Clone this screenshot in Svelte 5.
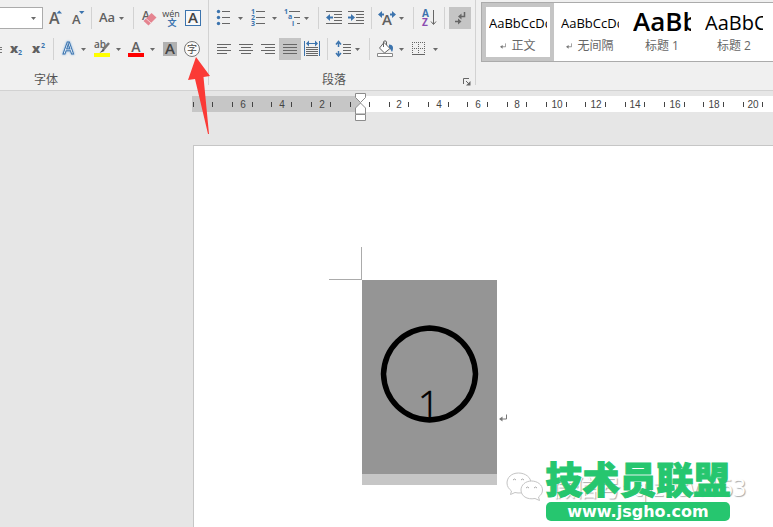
<script>
  const UNIT = 59 / 6;

  const styles = [
    { name: '正文', mark: true, kind: 'body', active: true },
    { name: '无间隔', mark: true, kind: 'body' },
    { name: '标题 1', kind: 'h1' },
    { name: '标题 2', kind: 'h2' }
  ];

  // quarter positions: odd ones get a tick, every fourth one a number
  const before = [1, 3, 4, 5, 7, 8, 9, 11, 12, 13, 15, 17];
  const after = Array.from({ length: 160 }, (_, i) => i + 1);
  const at = (n) => Math.round(n * UNIT);

  const aligns = [
    { title: '左对齐', rows: [[4, 14], [4, 10], [4, 14], [4, 10]] },
    { title: '居中', rows: [[4, 14], [6, 10], [4, 14], [6, 10]] },
    { title: '右对齐', rows: [[4, 14], [8, 10], [4, 14], [8, 10]] },
    { title: '两端对齐', rows: [[4, 14], [4, 14], [4, 14], [4, 14]], on: true }
  ];
</script>

{#snippet caret(x)}
  <path d="M{x} 10h5l-2.500 3z" fill="#6a6a6a" />
{/snippet}

{#snippet returnMark(size)}
  <svg class="ret" width={size} height={size} viewBox="0 0 8 8" aria-hidden="true">
    <path d="M7.500 0.500v4.500H2" fill="none" stroke="#777" />
    <path d="M3.500 2.500v5L0 5z" fill="#777" />
  </svg>
{/snippet}

<div class="app">
  <header class="ribbon">
    <section class="group font-group">
      <div class="row">
        <div class="combo">
          <select aria-label="字号"><option></option></select>
          <svg width="9" height="22" viewBox="0 0 9 22">{@render caret(1)}</svg>
        </div>
        <button aria-label="增大字号">
          <svg width="24" height="22">
            <text x="6" y="17" font-size="16" class="g">A</text>
            <path d="M13.500 6.500h5.500l-2.750-3z" fill="#3c74ae" />
          </svg>
        </button>
        <button aria-label="减小字号">
          <svg width="22" height="22">
            <text x="5" y="17" font-size="13" class="g">A</text>
            <path d="M12 4h5.500l-2.750 3z" fill="#3c74ae" />
          </svg>
        </button>
        <i class="sep tight"></i>
        <button aria-label="更改大小写">
          <svg width="37" height="22">
            <text x="5" y="15" font-size="13" class="g">Aa</text>
            {@render caret(25)}
          </svg>
        </button>
        <i class="sep tight"></i>
        <button aria-label="清除格式">
          <svg width="24" height="22">
            <text x="6" y="13" font-size="12" class="g">A</text>
            <path d="M15.500 6l5 4.500-8 8-5-4.500z" fill="#e58490" />
            <path d="M10 11.500l5 4.500" stroke="#f6d4d8" />
          </svg>
        </button>
        <button aria-label="拼音指南">
          <svg width="22" height="22">
            <text x="11" y="10" font-size="9" text-anchor="middle" class="k">wén</text>
            <text x="12" y="19" font-size="9" text-anchor="middle" class="b cjk">文</text>
          </svg>
        </button>
        <button aria-label="字符边框">
          <svg width="22" height="22">
            <rect x="3.500" y="3.500" width="15" height="15" fill="#f8f8f8" stroke="#3c74ae" />
            <text x="11" y="16" font-size="15" text-anchor="middle" class="k g">A</text>
          </svg>
        </button>
      </div>

      <div class="row">
        <button aria-label="删除线">
          <svg width="4" height="22"><path d="M0 9.500h2M0 11.500h2M0 14.500h2" stroke="#777" /></svg>
        </button>
        <button aria-label="下标">
          <svg width="23" height="22">
            <text x="6" y="15" font-size="13" class="g heavy">x</text>
            <text x="14" y="17" font-size="7" class="b">2</text>
          </svg>
        </button>
        <button aria-label="上标">
          <svg width="22" height="22">
            <text x="5" y="15" font-size="13" class="g heavy">x</text>
            <text x="14" y="10" font-size="7" class="b">2</text>
          </svg>
        </button>
        <i class="sep"></i>
        <button aria-label="文本效果">
          <svg width="34" height="22">
            <text x="6" y="16" font-size="16" class="hollow">A</text>
            {@render caret(24)}
          </svg>
        </button>
        <button aria-label="突出显示">
          <svg width="34" height="22">
            <text x="3" y="10" font-size="10" class="g">ab</text>
            <path d="M18 5l-6 7" stroke="#777" stroke-width="2.500" />
            <path d="M12 11l-3.500 4 5-2z" fill="#555" />
            <path d="M3 15h16v4H3z" fill="#ff0" />
            {@render caret(25)}
          </svg>
        </button>
        <button aria-label="字体颜色">
          <svg width="34" height="22">
            <text x="11" y="14" font-size="14" text-anchor="middle" class="g">A</text>
            <path d="M3 15h16v4H3z" fill="#f00" />
            {@render caret(25)}
          </svg>
        </button>
        <button aria-label="字符底纹">
          <svg width="22" height="22">
            <path d="M4 4h14v14H4z" fill="#b1b1b1" />
            <text x="11" y="16" font-size="15" text-anchor="middle" class="k g">A</text>
          </svg>
        </button>
        <button aria-label="带圈字符">
          <svg width="22" height="22">
            <circle cx="11" cy="11" r="7.500" fill="#fafafa" stroke="#777" />
            <text x="11" y="15" font-size="10" text-anchor="middle" class="k cjk">字</text>
          </svg>
        </button>
      </div>
      <footer>字体</footer>
    </section>

    <section class="group para-group">
      <div class="row">
        <button aria-label="项目符号">
          <svg width="34" height="22">
            <g fill="#3c74ae"><circle cx="5.500" cy="4.500" r="1.700" /><circle cx="5.500" cy="10.500" r="1.700" /><circle cx="5.500" cy="16.500" r="1.700" /></g>
            <path d="M9 4.500h8M9 10.500h8M9 16.500h8" class="line" />
            {@render caret(25)}
          </svg>
        </button>
        <button aria-label="编号">
          <svg width="34" height="22">
            <g font-size="7" class="b"><text x="4" y="7">1</text><text x="4" y="13">2</text><text x="4" y="19">3</text></g>
            <path d="M9 4.500h9M9 10.500h9M9 16.500h9" class="line" />
            {@render caret(25)}
          </svg>
        </button>
        <button aria-label="多级列表">
          <svg width="33" height="22">
            <g font-size="7" class="b"><text x="3" y="7">1</text><text x="7" y="12">a</text><text x="11" y="19">i</text></g>
            <path d="M8 4.500h11M13 10.500h6M16 16.500h3" class="line" />
            {@render caret(23)}
          </svg>
        </button>
        <i class="sep"></i>
        <button aria-label="减少缩进量">
          <svg width="23" height="22">
            <path d="M4 4.500h16M12 7.500h8M12 10.500h8M12 13.500h8M4 16.500h16" class="line" />
            <path d="M4 10.500l4-3.500v2.500h3v2H8V14z" fill="#3c74ae" />
          </svg>
        </button>
        <button aria-label="增加缩进量">
          <svg width="22" height="22">
            <path d="M3 4.500h16M11 7.500h8M11 10.500h8M11 13.500h8M3 16.500h16" class="line" />
            <path d="M10 10.500L6 7v2.500H3v2h3V14z" fill="#3c74ae" />
          </svg>
        </button>
        <i class="sep"></i>
        <button aria-label="中文版式">
          <svg width="34" height="22">
            <text x="12" y="18" font-size="15" text-anchor="middle" class="g">A</text>
            <path d="M3 7.500L7 4v2.500h2v2H7V11zM21 7.500L17 4v2.500h-2v2h2V11z" fill="#3c74ae" />
            {@render caret(24)}
          </svg>
        </button>
        <i class="sep"></i>
        <button aria-label="排序">
          <svg width="23" height="22">
            <text x="5" y="10" font-size="10" class="b">A</text>
            <text x="5" y="19" font-size="10" class="b purple">Z</text>
            <path d="M16.500 3v14M14 14.500l2.500 3 2.500-3" class="line" />
          </svg>
        </button>
        <i class="sep"></i>
        <button class="on last" aria-label="显示编辑标记">
          <svg width="22" height="22">
            <path d="M15.500 5v4.500H11M6 14.500h4.500" class="line" stroke-width="1.500" />
            <path d="M12.500 6.500v6L9 9.500zM9 11.500v6l3.500-3z" fill="#666" />
          </svg>
        </button>
      </div>

      <div class="row">
        {#each aligns as a}
          <button class:on={a.on} aria-label={a.title}>
            <svg width="22" height="22">
              {#each a.rows as [x, w], i}
                <path d="M{x} {6.5 + i * 3}h{w}" class="line" />
              {/each}
            </svg>
          </button>
        {/each}
        <button aria-label="分散对齐">
          <svg width="22" height="22">
            <path d="M3.500 3v15M18.500 3v15" stroke="#3c74ae" />
            <path d="M5 5.500l3-3v2.500h6V2.500l3 3-3 3V6H8v2.500z" fill="#3c74ae" />
            <path d="M5 9.500h12M5 11.500h12M5 13.500h12M5 15.500h12M5 17.500h12" class="line" />
          </svg>
        </button>
        <i class="sep"></i>
        <button aria-label="行和段落间距">
          <svg width="34" height="22">
            <path d="M7.500 5v4M7.500 13v4M5 6.500l2.500-3L10 6.500M5 15l2.500 3 2.500-3" fill="none" stroke="#3c74ae" stroke-width="1.500" />
            <path d="M12 6.500h8M12 9.500h8M12 12.500h8M12 15.500h8" class="line" />
            {@render caret(24)}
          </svg>
        </button>
        <i class="sep"></i>
        <button aria-label="底纹">
          <svg width="35" height="22">
            <path d="M16 6.500c4 0 5 3 3 7.500-1-1-1-3-3-4z" fill="#3c74ae" />
            <path d="M11 4.500l6 6-5.500 4.500-5-5z" fill="#fff" stroke="#666" />
            <path d="M10.500 9V4c0-1.500 3-1.500 3 0v3" fill="none" stroke="#666" />
            <path d="M4.500 15.500h15v3h-15z" fill="#fff" stroke="#888" />
            {@render caret(26)}
          </svg>
        </button>
        <button aria-label="边框">
          <svg width="34" height="22">
            <path d="M4 4.500h13M4 10.500h13M4.500 4v13M10.500 4v13M16.500 4v13" fill="none" stroke="#666" stroke-dasharray="1 1" />
            <path d="M4 16.500h13" class="line" />
            {@render caret(25)}
          </svg>
        </button>
      </div>
      <footer>
        段落
        <button class="launcher" aria-label="段落设置">
          <svg width="8" height="8" viewBox="0 0 8 8">
            <path d="M.500 6V.500H6M3 3l3 3" class="line" />
            <path d="M7.500 3v4.500H3z" fill="#666" />
          </svg>
        </button>
      </footer>
    </section>

    <section class="gallery">
      {#each styles as s}
        <button class="style {s.kind}" class:active={s.active}>
          <span class="sample">AaBbCcDd</span>
          <span class="name">{#if s.mark}{@render returnMark(6)}{/if}{s.name}</span>
        </button>
      {/each}
    </section>
  </header>

  <div class="ruler">
    <svg class="margin" width="169" height="16">
      {#each before as n}
        {#if n % 2}
          <path d="M{168 - at(n)}.5 6v5" stroke="#444" />
        {:else if n % 4 === 0}
          <text x={169 - at(n)} y="12">{n / 2}</text>
        {/if}
      {/each}
    </svg>
    <svg class="body" height="16">
      {#each after as n}
        {#if n % 2}
          <path d="M{at(n) - 2}.5 6v5" stroke="#444" />
        {:else if n % 4 === 0}
          <text x={at(n) - 1} y="12">{n / 2}</text>
        {/if}
      {/each}
    </svg>
    <svg class="indent" width="12" height="29">
      <path d="M.500 .500h10v4l-5 5-5-5zM.500 21v-6l5-5 5 5v6z" fill="#fff" stroke="#8c8c8c" />
      <path d="M.500 21.500h10v6h-10z" fill="#fff" stroke="#8c8c8c" />
    </svg>
  </div>

  <main class="page">
    <div class="corner"></div>
    <div class="paragraph">
      <div class="selection">
        <svg width="135" height="194">
          <path d="M67.500 48C93 49 112.500 68 113.500 94 112.500 120 93 139 67.500 140 42 139 22.500 120 21.500 94 22.500 68 42 49 67.500 48z" fill="none" stroke="#000" stroke-width="5.500" />
          <text x="67" y="139" font-size="39" text-anchor="middle">1</text>
        </svg>
      </div>
      {@render returnMark(8)}
    </div>

    <div class="watermark">
      <svg width="38" height="32" viewBox="0 0 38 32" aria-hidden="true">
        <g fill="#fff" stroke="#c4c4c4">
          <path d="M12.500 2C5.500 2 1 6.500 1 12c0 3.500 2 6 4.500 8L4.500 23.500l4.500-2c8 2 16-2 16-9.500C25 6.500 19.500 2 12.500 2z" />
          <path d="M25.500 10C19.500 10 15 14 15 19c0 6 6 10 14 8.500l4.500 2-1-3.500c2.500-2 4-4 4-7 0-5-5-9-11-9z" />
        </g>
        <path d="M7 9q1.500-2 3 0M15 9q1.500-2 3 0M20 17q1.500-2 3 0M28 17q1.500-2 3 0" fill="none" stroke="#aaa" />
      </svg>
      <span>微信号: qlzhsw163</span>
    </div>
    <div class="logo">
      <strong>技术员联盟</strong>
      <a href="#top">www.jsgho.com</a>
    </div>
  </main>

  <svg class="pointer" width="24" height="80" viewBox="0 0 24 80" aria-hidden="true">
    <path d="M9 1L23 20l-6.500 1L22 78h-1L8 23l-7 1z" fill="#fb3a36" />
  </svg>
</div>

<style>
  :global(body) { margin: 0; background: #e6e6e6; }
  .app { position: relative; display: flex; flex-direction: column; min-height: 100vh; overflow: hidden; font-family: "Open Sans", "Noto Sans CJK SC", sans-serif; font-size: 12px; color: #555; }
  svg { display: block; flex-shrink: 0; }
  button { display: block; flex-shrink: 0; padding: 0; border: 0; background: none; font: inherit; color: inherit; }

  .ribbon { display: flex; background: #f0f0f0; border-bottom: 1px solid #d2d2d2; padding-bottom: 5px; }
  .group { display: flex; flex-direction: column; gap: 9px; flex-shrink: 0; padding-top: 7px; border-right: 1px solid #d2d2d2; }
  .font-group { width: 208px; }
  .para-group { width: 262px; padding-left: 4px; }
  .row { display: flex; height: 22px; }
  .row .on { background: #c5c5c5; }
  .row .last { margin-left: 1px; }
  .sep { width: 1px; flex-shrink: 0; margin: 0 3px 0 4px; background: #d2d2d2; }
  .sep.tight { margin: 0 2px; }
  .combo { display: flex; box-sizing: border-box; width: 43px; height: 22px; border: 1px solid #ababab; border-left: 0; background: #fff; }
  .combo select { flex: 1; min-width: 0; border: 0; background: none; appearance: none; }
  .combo svg { margin-right: 3px; margin-top: -1px; }
  footer { display: flex; align-items: center; box-sizing: border-box; height: 16px; padding-top: 5px; line-height: 12px; }
  .font-group footer { padding-left: 34px; }
  .para-group footer { padding-left: 109px; }
  .launcher { margin-left: auto; margin-right: 4px; padding-top: 4px; }

  .g { fill: #606060; font-weight: 600; }
  .heavy { font-weight: 800; }
  .k { fill: #444; }
  .b { fill: #3c74ae; font-weight: 700; }
  .purple { fill: #8a4bb0; }
  .cjk { font-family: "Noto Sans CJK SC", sans-serif; }
  .line { fill: none; stroke: #666; }
  .hollow { fill: #fff; stroke: #3c74ae; font-weight: 600; filter: drop-shadow(0 0 1px #7fb0e0); }

  .gallery { display: flex; flex: 1; min-width: 0; align-self: flex-start; box-sizing: border-box; height: 60px; margin: 2px 0 0 5px; overflow: hidden; border: 1px solid #ababab; border-right: 0; background: #fff; }
  .style { display: flex; flex-direction: column; align-items: center; gap: 3px; box-sizing: border-box; width: 72px; height: 58px; padding: 2px 3px; border: 4px solid transparent; }
  .style.active { border-color: #c5c5c5; }
  .sample { width: 58px; height: 27px; overflow: hidden; line-height: 28px; text-align: left; color: #000; font-size: 13px; }
  .h1 .sample { line-height: 25px; font-size: 26px; font-weight: 600; }
  .h2 .sample { font-size: 20px; }
  .name { display: flex; align-items: center; gap: 5px; line-height: 18px; white-space: nowrap; color: #666; }

  .ruler { position: relative; display: flex; margin: 5px 0 0 192px; height: 16px; }
  .ruler text { font: 10px "Liberation Sans", sans-serif; text-anchor: middle; fill: #444; }
  .ruler .margin { background: #c6c6c6; }
  .ruler .body { flex: 1; min-width: 0; background: #fff; }
  .ruler .indent { position: absolute; left: 163px; top: -3px; }

  .page { position: relative; flex: 1; margin: 33px 0 0 193px; padding-top: 101px; border: solid #c6c6c6; border-width: 1px 0 0 1px; background: #fff; }
  .corner { box-sizing: border-box; width: 33px; height: 33px; margin-left: 135px; border: solid #ababab; border-width: 0 1px 1px 0; }
  .paragraph { display: flex; align-items: center; gap: 2px; margin-left: 168px; }
  .paragraph > :global(.ret) { margin-top: 70px; }
  .selection { background: #959595; border-bottom: 11px solid #c6c6c6; }
  .selection text { font-weight: 300; fill: #000; stroke: #000; stroke-width: 0.5; }

  .watermark { position: absolute; left: 312px; top: 325px; display: flex; align-items: center; gap: 8px; white-space: nowrap; font-size: 23px; line-height: 32px; color: #fff; text-shadow: 1px 1px 1px #aaa; }
  .logo { position: absolute; left: 351px; top: 312px; width: 186px; text-align: center; }
  .logo strong { display: block; font: 900 37px/40px "Noto Sans CJK SC", sans-serif; white-space: nowrap; color: #26c66f; -webkit-text-stroke: 1px #26c66f; }
  .logo a { display: block; margin: 4px 1px 0; border-radius: 5px; background: #26c66f; color: #fff; font: bold 16px/19px "DejaVu Sans", sans-serif; text-decoration: none; }

  .pointer { position: absolute; left: 187px; top: 56px; }
</style>
